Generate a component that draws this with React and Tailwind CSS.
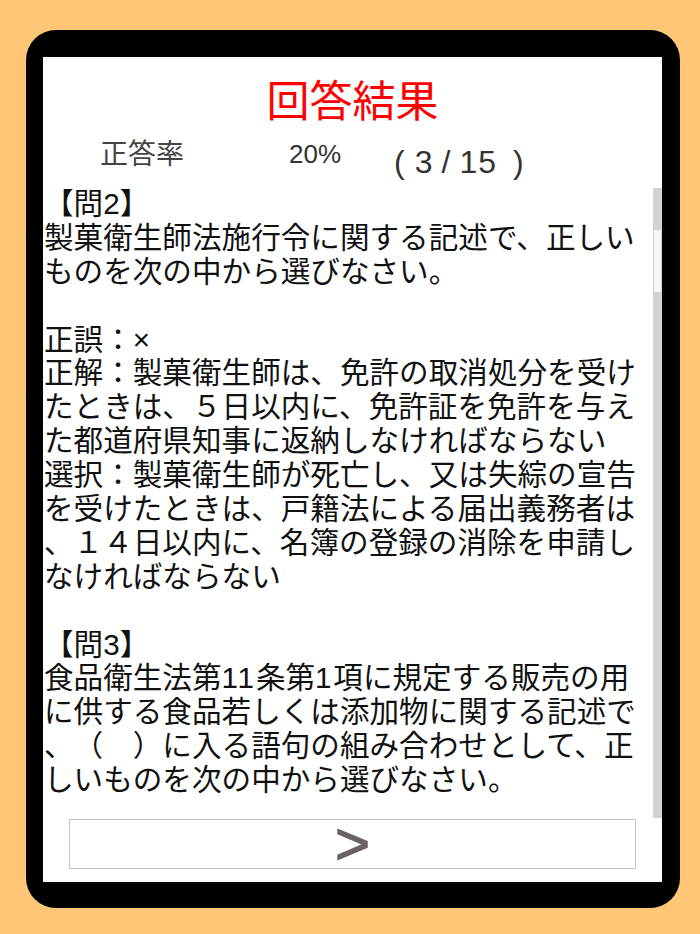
import React from "react";

const lines = [
  "【問2】",
  "製菓衛生師法施行令に関する記述で、正しい",
  "ものを次の中から選びなさい。",
  "",
  "正誤：×",
  "正解：製菓衛生師は、免許の取消処分を受け",
  "たときは、５日以内に、免許証を免許を与え",
  "た都道府県知事に返納しなければならない",
  "選択：製菓衛生師が死亡し、又は失綜の宣告",
  "を受けたときは、戸籍法による届出義務者は",
  "、１４日以内に、名簿の登録の消除を申請し",
  "なければならない",
  "",
  "【問3】",
  null,
  "に供する食品若しくは添加物に関する記述で",
  "、（　）に入る語句の組み合わせとして、正",
  "しいものを次の中から選びなさい。",
];

function Line({ text }) {
  if (text === null) {
    return (
      <div className="h-[33.9px] whitespace-pre">
        食品衛生法第<span className="tracking-[1.8px]">11</span>条第
        <span className="tracking-[1.8px]">1</span>項に規定する販売の用
      </div>
    );
  }
  return <div className="h-[33.9px] whitespace-pre">{text === "" ? "\u00a0" : text}</div>;
}

export default function App() {
  return (
    <div className="w-[700px] h-[934px] bg-[#ffc677] pt-[30px] pl-[26px] font-['Liberation_Sans','Noto_Sans_CJK_JP',sans-serif] [text-spacing-trim:space-all]">
      <div className="w-[654px] h-[878px] bg-black rounded-[30px] pt-[27px] pl-[17px] pr-[18px] pb-[26px]">
        <div className="w-[619px] h-[825px] bg-white flex flex-col pt-[24px]">
          <div className="h-[43px] text-[43px] leading-[43px] text-center text-[#ff0000]">回答結果</div>
          <div className="mt-[17px] h-[46px] flex items-start pl-[57px]">
            <div className="text-[28px] leading-[28px] text-[#444]">正答率</div>
            <div className="ml-[105px] text-[26px] leading-[26px] text-[#333]">20%</div>
            <div className="ml-[53px] mt-[5px] text-[32px] leading-[32px] text-[#333] flex">
              <span>(</span>
              <span className="ml-[10px]">3</span>
              <span className="ml-[9px]">/</span>
              <span className="ml-[9px] tracking-[1px]">15</span>
              <span className="ml-[16px]">)</span>
            </div>
          </div>
          <div className="h-[631px] flex">
            <div className="flex-1 overflow-hidden pl-[1px] text-[29.6px] leading-[33.9px] text-[#111]">
              {lines.map((t, i) => (
                <Line key={i} text={t} />
              ))}
            </div>
            <div className="w-[9px] mt-[1px] bg-[#d3d3d3] flex flex-col">
              <div className="h-[42px]" />
              <div className="h-[62px] mx-[1px] bg-[#f5f5f5]" />
            </div>
          </div>
          <div className="mt-[1px] mx-[26px] h-[50px] border border-[#c4c4c4] flex items-center justify-center text-[60px] leading-none text-[#6a6262] [-webkit-text-stroke:1.2px_#6a6262]">
            &gt;
          </div>
        </div>
      </div>
    </div>
  );
}
